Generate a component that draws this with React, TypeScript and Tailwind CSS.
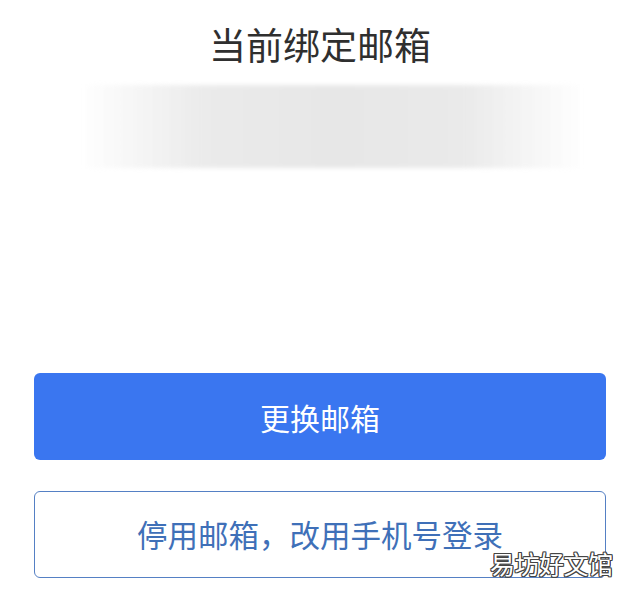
export default function App() {
  return (
    <div
      className="relative w-[640px] h-[594px] bg-white overflow-hidden"
      style={{ fontFamily: '"Noto Sans CJK SC", "Noto Sans", sans-serif' }}
    >
      <h1 className="pt-[17px] text-center text-[37px] leading-[54px] font-normal text-[#2f2f2f]">
        当前绑定邮箱
      </h1>

      {/* masked address */}
      <div className="mt-[14px] ml-[80px] w-[505px] h-[83px] bg-[linear-gradient(to_right,rgba(232,232,232,0)_0%,#ebebeb_24%,#e7e7e7_50%,#eaeaea_76%,rgba(232,232,232,0)_100%)] blur-[2px]" />

      <div className="mt-[205px] px-[34px] flex flex-col gap-[31px]">
        <button className="h-[87px] w-full rounded-[6px] bg-[#3a76f0] text-white text-[30px] leading-none">
          更换邮箱
        </button>
        <button className="h-[87px] w-full rounded-[6px] border-[1.5px] border-[#5580c4] bg-white text-[#3f70b8] text-[30.5px] leading-none">
          停用邮箱，改用手机号登录
        </button>
      </div>

      <div className="absolute left-[490px] top-[545px] text-[25px] leading-[36px] text-white tracking-[-0.5px] [text-shadow:1px_0_0_#444,-1px_0_0_#444,0_1px_0_#444,0_-1px_0_#444,1px_1px_0_#444,-1px_-1px_0_#444,1px_-1px_0_#444,-1px_1px_0_#444]">
        易坊好文馆
      </div>
    </div>
  );
}
